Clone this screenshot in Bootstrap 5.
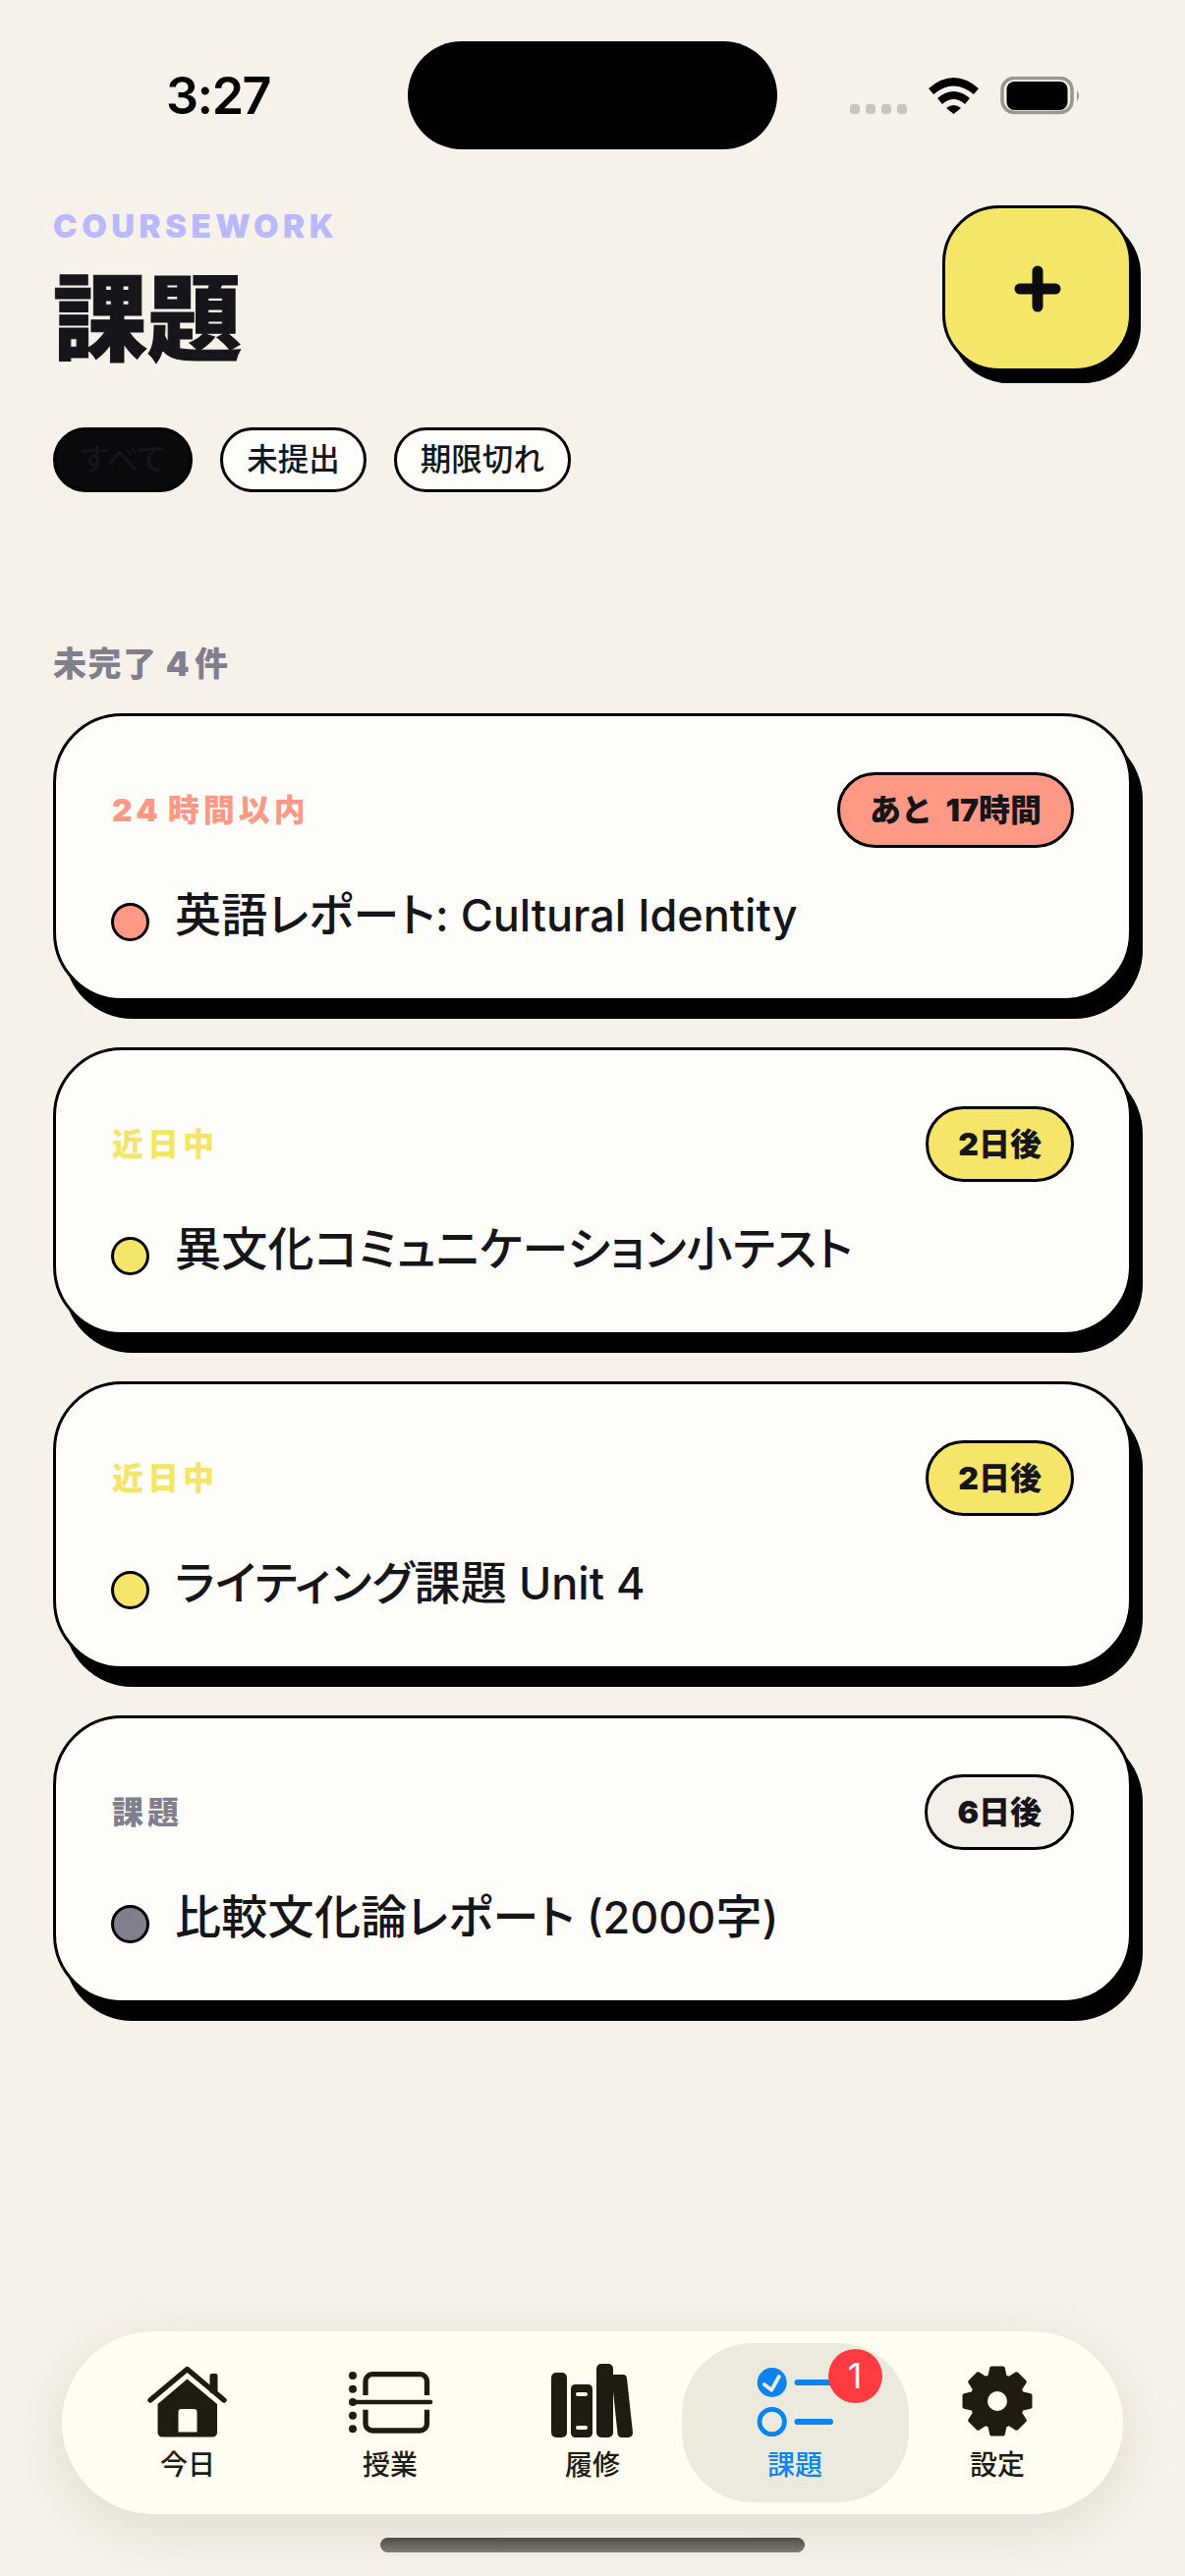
<!DOCTYPE html>
<html lang="ja">
<head>
  <meta charset="UTF-8">
  <meta name="viewport" content="width=device-width, initial-scale=1.0">
  <title>課題</title>
  <link rel="stylesheet" href="https://cdn.jsdelivr.net/npm/bootstrap@5.3.2/dist/css/bootstrap.min.css">
  <style>
    :root { --ink: #15151a; --paper: #f6f2e9; --card-white: #fffdf9; --coral: #ff9885; --lemon: #f5e66a; --slate: #7f7f8e; }
    html, body { height: 100%; }
    body { background: var(--paper); color: var(--ink); font-family: Inter, "Noto Sans CJK JP", sans-serif; margin: 0; font-feature-settings: "palt"; }
    .screen { width: 1206px; height: 2622px; overflow: hidden; position: relative; }

    .status-bar { height: 209px; padding: 0 0 0 169px; position: relative; }
    .status-time { font-size: 52px; font-weight: 600; line-height: 1; padding-top: 72px; letter-spacing: -1.5px; color: #000; }
    .island { position: absolute; left: 415px; top: 42px; width: 376px; height: 110px; background: #000; border-radius: 55px; }
    .status-icons { position: absolute; left: 865px; top: 78px; }

    .head-row { padding: 0 54px; }
    .eyebrow { font-size: 33px; font-weight: 900; letter-spacing: 4.5px; color: #b9b9ff; line-height: 1; margin-top: 5px; }
    .page-title { font-size: 96px; font-weight: 900; line-height: 1; margin: 29px 0 0; color: var(--ink); -webkit-text-stroke: 1px var(--ink); }
    .add-btn { width: 193px; height: 169px; background: var(--lemon); border: 3px solid #000; border-radius: 58px; box-shadow: 9px 12px 0 #000; padding: 0; }

    .chip-row { padding: 0 54px; margin-top: 57px; height: 66px; gap: 28px; }
    .chip { height: 66px; border: 3.5px solid #000; border-radius: 33px; background: var(--card-white); font-size: 31.5px; font-weight: 500; line-height: 1; padding: 0 24px; color: var(--ink); }
    .chip-on { background: #0a0a0c; padding: 0 25px; }

    .section-label { font-size: 34px; font-weight: 900; color: var(--slate); line-height: 1; margin: 158px 54px 0; letter-spacing: 1.5px; }

    .task-list { padding: 0 54px; margin-top: 33px; gap: 47px; }
    .task-card { height: 293px; border: 3px solid #000; border-radius: 70px; background: var(--card-white); box-shadow: 11px 18px 0 #000; padding: 57px 56px 0 56px; }
    .task-kind { font-size: 32px; font-weight: 900; line-height: 1; letter-spacing: 4px; margin-left: 1px; font-feature-settings: normal; }
    .kind-coral { color: var(--coral); }
    .kind-lemon { color: var(--lemon); }
    .kind-slate { color: var(--slate); }
    .due-pill { height: 77px; border: 3px solid #000; border-radius: 39px; font-size: 32px; font-weight: 900; line-height: 1; padding: 0 30px; font-feature-settings: normal; word-spacing: 7px; }
    .due-coral { background: var(--coral); }
    .due-lemon { background: var(--lemon); }
    .due-grey { background: #f1efe8; }
    .task-row { margin-top: 38px; gap: 26px; }
    .task-dot { width: 39px; height: 39px; border: 3px solid #000; border-radius: 50%; flex: none; margin-top: 14px; }
    .task-name { font-size: 45px; font-weight: 500; line-height: 60px; color: var(--ink); }
    .name-cjk { font-size: 47px; letter-spacing: .3px; }

    .tab-shell { position: absolute; left: 63px; top: 2373px; width: 1080px; height: 186px; border-radius: 93px; background: #fffcf1; box-shadow: 0 14px 60px rgba(60,50,20,.11); padding: 12px 25px 0; }
    .tab-item { flex: 0 0 206px; height: 162px; border-radius: 72px; padding-top: 19px; color: #1f1b10; font-size: 28px; font-weight: 500; line-height: 1; position: relative; }
    .tab-item svg { display: block; margin-bottom: 11px; }
    .tab-on { flex-basis: 231px; background: #ece9dd; color: #0a84f0; margin: 0 -12.5px; }
    .tab-badge { position: absolute; left: 149px; top: 6px; width: 55px; height: 55px; border-radius: 50%; background: #ff3b42; color: #fff; font-size: 36px; font-weight: 400; line-height: 55px; text-align: center; }
    .home-bar { position: absolute; left: 387px; top: 2583px; width: 432px; height: 15px; border-radius: 8px; background: linear-gradient(#4e4d49, #7e7d78); }
  </style>
</head>
<body>
  <div class="screen">
    <div class="status-bar">
      <div class="status-time">3:27</div>
      <div class="island"></div>
      <svg class="status-icons" width="240" height="40" viewBox="0 0 240 40">
        <g fill="#c9c5bb">
          <rect x="0" y="28" width="10" height="10" rx="3.500"/><rect x="16" y="28" width="10" height="10" rx="3.500"/><rect x="32" y="28" width="10" height="10" rx="3.500"/><rect x="48" y="28" width="10" height="10" rx="3.500"/>
        </g>
        <path d="M80 12 Q105.500 -10 131 12 L126 18 Q105.500 1 85 18 Z M89 22 Q105.500 8 122 22 L117 28 Q105.500 18 94 28 Z M98 32 Q105.500 26 113 32 L105.500 38 Z" fill="#000"/>
        <rect x="155" y="1.500" width="71" height="35" rx="12" fill="none" stroke="#9c978c" stroke-width="3.500"/>
        <rect x="159.500" y="5" width="62" height="29" rx="8" fill="#000"/>
        <path d="M231 14 Q235 19.500 231 25 Z" fill="#9c978c"/>
      </svg>
    </div>

    <div class="head-row d-flex justify-content-between align-items-start">
      <div>
        <div class="eyebrow">COURSEWORK</div>
        <h1 class="page-title">課題</h1>
      </div>
      <button class="add-btn d-flex align-items-center justify-content-center" type="button">
        <svg width="48" height="48" viewBox="0 0 48 48"><path d="M24 6v36M6 24h36" stroke="#0c0c0e" stroke-width="11" stroke-linecap="round"/></svg>
      </button>
    </div>

    <div class="chip-row d-flex">
      <span class="chip chip-on d-flex align-items-center">すべて</span>
      <span class="chip d-flex align-items-center">未提出</span>
      <span class="chip d-flex align-items-center">期限切れ</span>
    </div>

    <div class="section-label">未完了 4&#8202;件</div>

    <div class="task-list d-flex flex-column" id="taskList"></div>

    <div class="tab-shell d-flex">
      <div class="tab-item d-flex flex-column align-items-center">
        <svg width="88" height="80" viewBox="0 0 88 80"><g transform="translate(3 5)"><path d="M3 34 40.500 2.500 78 34" fill="none" stroke="#1f1b10" stroke-width="5.500" stroke-linecap="round" stroke-linejoin="round"/><rect x="63.500" y="7" width="8" height="20" rx="2" fill="#1f1b10"/><path d="M40.500 12.500 71 38v29a4.500 4.500 0 0 1-4.500 4.500H15A4.500 4.500 0 0 1 10.500 67V38Z M31.500 46v20.500h19V46a3 3 0 0 0-3-3h-13a3 3 0 0 0-3 3Z" fill="#1f1b10" fill-rule="evenodd"/></g></svg>
        今日
      </div>
      <div class="tab-item d-flex flex-column align-items-center">
        <svg width="88" height="80" viewBox="0 0 88 80"><g transform="translate(0 4)"><g fill="#1f1b10"><circle cx="6" cy="10" r="4"/><circle cx="6" cy="23.700" r="4"/><circle cx="6" cy="37" r="4"/><circle cx="6" cy="50.700" r="4"/><circle cx="6" cy="64.300" r="4"/></g><path d="M6 37H85" stroke="#1f1b10" stroke-width="4.700" stroke-linecap="round"/><path d="M19 30V15.700a7 7 0 0 1 7-7H74.500a7 7 0 0 1 7 7V30M19 44.700V59a7 7 0 0 0 7 7H74.500a7 7 0 0 0 7-7V44.700" fill="none" stroke="#1f1b10" stroke-width="5.300"/></g></svg>
        授業
      </div>
      <div class="tab-item d-flex flex-column align-items-center">
        <svg width="88" height="80" viewBox="0 0 88 80"><g fill="#1f1b10"><rect x="2" y="11" width="16" height="66" rx="5"/><rect x="22" y="23" width="22" height="54" rx="4.500"/><rect x="48" y="2" width="17" height="75" rx="5"/><path d="M65 13 75 13a4 4 0 0 1 4 3.700L85 72a4.500 4.500 0 0 1-4.500 5H74a4.500 4.500 0 0 1-4.500-4L65 30Z"/></g><g fill="#fffcf1"><rect x="27" y="31" width="12" height="4" rx="2"/><rect x="27" y="65" width="12" height="4" rx="2"/></g></svg>
        履修
      </div>
      <div class="tab-item tab-on d-flex flex-column align-items-center">
        <svg width="88" height="80" viewBox="0 0 88 80"><circle cx="20.700" cy="21" r="15" fill="#0a84f0"/><path d="M12.800 23l7.500 5.700 7.500-13.700" fill="none" stroke="#ece9dd" stroke-width="3.800" stroke-linecap="round" stroke-linejoin="round"/><circle cx="20.700" cy="61" r="12.700" fill="none" stroke="#0a84f0" stroke-width="4.700"/><path d="M46.500 21H84M46.500 61H80" stroke="#0a84f0" stroke-width="6" stroke-linecap="round"/></svg>
        課題
        <span class="tab-badge">1</span>
      </div>
      <div class="tab-item d-flex flex-column align-items-center">
        <svg width="76" height="80" viewBox="-38 -40 76 80" id="gear"></svg>
        設定
      </div>
    </div>
    <div class="home-bar"></div>
  </div>

  <script>
    const tasks = [
      { kind: "24&#8202;時間以内", color: "coral", due: "あと 17時間", name: "英語レポート: Cultural Identity" },
      { kind: "近日中", color: "lemon", due: "2日後", name: "異文化コミュニケーション小テスト" },
      { kind: "近日中", color: "lemon", due: "2日後", name: "ライティング課題 Unit 4" },
      { kind: "課題", color: "slate", due: "6日後", name: "比較文化論レポート (2000字)" }
    ];
    const list = document.getElementById("taskList");
    tasks.forEach((t) => {
      const dueClass = t.color === "slate" ? "grey" : t.color;
      const dotColor = t.color === "slate" ? "#7f7f8e" : t.color === "coral" ? "#ff9885" : "#f5e66a";
      // japanese runs sit a little larger than the latin ones
      const nameHtml = t.name.replace(/[\u3040-\u30ff\u4e00-\u9fff]+/g, (run) => `<span class="name-cjk">${run}</span>`);
      const card = document.createElement("div");
      card.className = "task-card";
      card.innerHTML = `
        <div class="d-flex justify-content-between align-items-center">
          <span class="task-kind kind-${t.color}">${t.kind}</span>
          <span class="due-pill due-${dueClass} d-flex align-items-center">${t.due}</span>
        </div>
        <div class="task-row d-flex align-items-center">
          <span class="task-dot" style="background:${dotColor}"></span>
          <span class="task-name">${nameHtml}</span>
        </div>`;
      list.appendChild(card);
    });

    // gear teeth
    let d = "";
    const teeth = 8;
    for (let i = 0; i < teeth; i++) {
      const a = (i / teeth) * Math.PI * 2 - Math.PI / 2;
      const pt = (r, o) => `${(Math.cos(a + o) * r).toFixed(1)} ${(Math.sin(a + o) * r).toFixed(1)}`;
      d += `${i ? "L" : "M"}${pt(26, -0.3)}L${pt(34, -0.17)}L${pt(34, 0.17)}L${pt(26, 0.3)}`;
    }
    d += "Z M12 0a12 12 0 1 0-24 0a12 12 0 1 0 24 0Z";
    document.getElementById("gear").innerHTML = `<path d="${d}" fill="#1f1b10" fill-rule="evenodd" stroke="#1f1b10" stroke-width="4" stroke-linejoin="round"/>`;
  </script>
  <script src="https://cdn.jsdelivr.net/npm/bootstrap@5.3.2/dist/js/bootstrap.bundle.min.js"></script>
</body>
</html>
